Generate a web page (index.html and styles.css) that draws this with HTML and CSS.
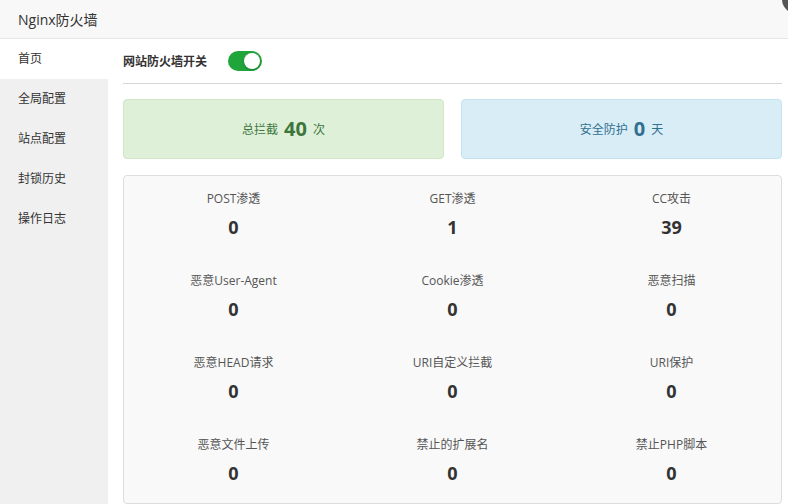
FILE: index.html
```html
<!DOCTYPE html>
<html lang="zh">
<head>
<meta charset="utf-8">
<title>Nginx防火墙</title>
<link rel="stylesheet" href="styles.css">
</head>
<body>
<div class="window">
  <header class="topbar">
    <span class="title">Nginx防火墙</span>
    <span class="close-dot"></span>
  </header>
  <div class="body">
    <nav class="sidebar">
      <a class="nav-item active">首页</a>
      <a class="nav-item">全局配置</a>
      <a class="nav-item">站点配置</a>
      <a class="nav-item">封锁历史</a>
      <a class="nav-item">操作日志</a>
    </nav>
    <main class="main">
      <div class="switch-row">
        <span class="switch-label">网站防火墙开关</span>
        <span class="toggle on"><span class="knob"></span></span>
      </div>
      <div class="summary">
        <div class="card green">总拦截 <b>40</b> 次</div>
        <div class="card blue">安全防护 <b>0</b> 天</div>
      </div>
      <div class="stats">
        <div class="stat"><div class="label">POST渗透</div><div class="num">0</div></div>
        <div class="stat"><div class="label">GET渗透</div><div class="num">1</div></div>
        <div class="stat"><div class="label">CC攻击</div><div class="num">39</div></div>
        <div class="stat"><div class="label">恶意User-Agent</div><div class="num">0</div></div>
        <div class="stat"><div class="label">Cookie渗透</div><div class="num">0</div></div>
        <div class="stat"><div class="label">恶意扫描</div><div class="num">0</div></div>
        <div class="stat"><div class="label">恶意HEAD请求</div><div class="num">0</div></div>
        <div class="stat"><div class="label">URI自定义拦截</div><div class="num">0</div></div>
        <div class="stat"><div class="label">URI保护</div><div class="num">0</div></div>
        <div class="stat"><div class="label">恶意文件上传</div><div class="num">0</div></div>
        <div class="stat"><div class="label">禁止的扩展名</div><div class="num">0</div></div>
        <div class="stat"><div class="label">禁止PHP脚本</div><div class="num">0</div></div>
      </div>
    </main>
  </div>
</div>
</body>
</html>
```
FILE: styles.css
```css
html, body {
  margin: 0;
  padding: 0;
  width: 788px;
  height: 504px;
  overflow: hidden;
  background: #fff;
}
body {
  font-family: "Open Sans", "Noto Sans CJK SC", sans-serif;
  font-size: 12px;
  color: #333;
}
.window {
  display: flex;
  flex-direction: column;
  height: 504px;
}
.topbar {
  position: relative;
  height: 39px;
  flex: none;
  box-sizing: border-box;
  background: #f8f8f8;
  border-bottom: 1px solid #e6e6e6;
  padding-left: 18px;
  display: flex;
  align-items: center;
}
.title {
  font-size: 14px;
  color: #333;
}
.close-dot {
  position: absolute;
  right: -24px;
  top: -16px;
  width: 30px;
  height: 30px;
  border-radius: 50%;
  background: #555;
}
.body {
  flex: 1;
  display: flex;
  min-height: 0;
}
.sidebar {
  width: 108px;
  flex: none;
  background: #f0f0f0;
  display: flex;
  flex-direction: column;
}
.nav-item {
  height: 40px;
  line-height: 40px;
  padding-left: 18px;
  font-size: 12px;
  color: #333;
}
.nav-item.active {
  background: #fff;
}
.main {
  flex: 1;
  padding: 0 6px 0 15px;
  box-sizing: border-box;
  min-width: 0;
}
.switch-row {
  display: flex;
  align-items: center;
  height: 45px;
  border-bottom: 1px solid #d6d6d6;
  box-sizing: border-box;
}
.switch-label {
  font-weight: bold;
  font-size: 12px;
  color: #333;
  margin-right: 21px;
}
.toggle {
  position: relative;
  display: inline-block;
  width: 34px;
  height: 20px;
  border-radius: 10px;
  background: #20a53a;
}
.toggle .knob {
  position: absolute;
  right: 2px;
  top: 2px;
  width: 16px;
  height: 16px;
  border-radius: 50%;
  background: #fff;
  box-shadow: 0 1px 2px rgba(0,0,0,0.25);
}
.summary {
  display: flex;
  gap: 17px;
  margin-top: 15px;
}
.card {
  flex: 1;
  height: 60px;
  box-sizing: border-box;
  border-radius: 4px;
  display: flex;
  align-items: center;
  justify-content: center;
  font-size: 12px;
}
.card b {
  font-size: 20px;
  font-weight: bold;
  margin: 0 6px;
  position: relative;
  top: -1px;
}
.card.green {
  background: #dff0d8;
  border: 1px solid #d0e6c4;
  color: #3c763d;
}
.card.blue {
  background: #d9edf7;
  border: 1px solid #c4e3f1;
  color: #31708f;
}
.stats {
  margin-top: 16px;
  background: #f9f9f9;
  border: 1px solid #dddddd;
  border-radius: 4px;
  display: grid;
  grid-template-columns: repeat(3, 1fr);
}
.stat {
  height: 82px;
  box-sizing: border-box;
  padding-top: 14px;
  text-align: center;
}
.stat:nth-last-child(-n+3) {
  height: 81px;
}
.stat .label {
  font-size: 12px;
  line-height: 18px;
  color: #555;
}
.stat .num {
  margin-top: 7px;
  font-size: 18px;
  line-height: 24px;
  font-weight: bold;
  color: #333;
}
```
